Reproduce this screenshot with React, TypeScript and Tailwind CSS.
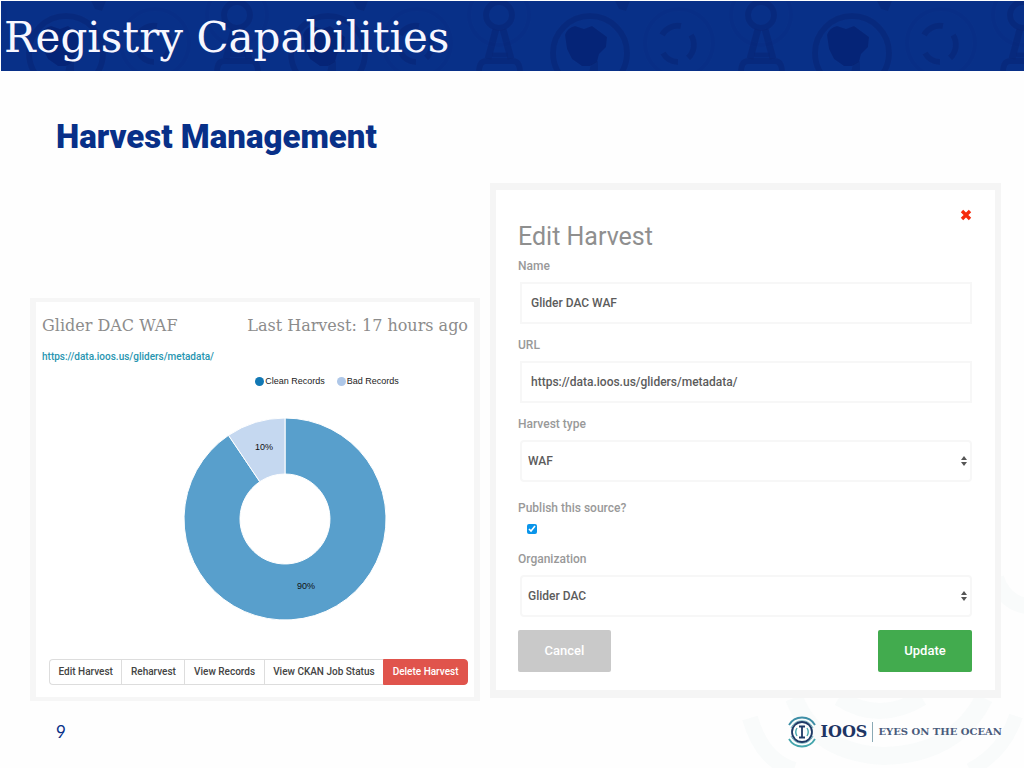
import { ReactNode } from "react"

const slab = "font-['DejaVu_Serif',serif]"
const fieldStyle = "ml-0.5 h-[42px] border-2 border-[#f7f7f7] bg-white text-[12px] font-medium text-[#5c5c5c]"

const actions = ["Edit Harvest", "Reharvest", "View Records", "View CKAN Job Status"]

function HeaderPattern() {
    return (
        <svg className="absolute inset-0 h-full w-full" aria-hidden="true">
            <defs>
                <pattern id="ocean" x="459" y="0" width="262" height="71" patternUnits="userSpaceOnUse">
                    <g fill="none" stroke="#062476" strokeOpacity="0.6">
                        <circle cx="39" cy="14" r="13" strokeWidth="6" />
                        <path d="M36 28 L28 58 M43 28 L51 58" strokeWidth="7" />
                        <path d="M32 54 H48" strokeWidth="5" />
                        <path d="M19 72 Q19 60 26 60 H53 Q60 60 60 72" strokeWidth="6" />
                        <circle cx="130" cy="52" r="37" strokeWidth="6" />
                        <path d="M202 34 A18 18 0 0 1 221 25 M231 34 A18 18 0 0 1 228 57 M218 61 A18 18 0 0 1 203 52" strokeWidth="6" />
                        <circle cx="219" cy="42" r="34" strokeWidth="4" strokeOpacity="0.15" />
                        <circle cx="39" cy="14" r="30" strokeWidth="4" strokeOpacity="0.15" />
                    </g>
                    <path d="M105 34 Q107 27 115 25 L124 28 L132 25 L147 36 L146 46 L139 53 L137 61 L130 65 L122 65 L112 58 L107 48 Z" fill="#04206f" fillOpacity="0.7" />
                    <path d="M155 0 H170 L166 10 L159 8 Z M131 63 L138 60 V71 H129 Z" fill="#04206f" fillOpacity="0.4" />
                </pattern>
            </defs>
            <rect width="100%" height="100%" fill="url(#ocean)" />
        </svg>
    )
}

function Watermark() {
    return (
        <svg className="absolute bottom-0 right-0 -z-10 h-[220px] w-[290px]" viewBox="0 0 290 220" fill="none" stroke="#f9fbfb" aria-hidden="true">
            <path d="M16 170 Q28 212 60 222" strokeWidth="16" />
            <path d="M60 150 Q82 205 150 208 Q222 206 250 150" strokeWidth="18" />
            <path d="M105 150 Q145 176 188 150" strokeWidth="16" />
            <path d="M262 30 Q270 54 292 58" strokeWidth="16" />
            <path d="M236 222 Q270 204 282 168" strokeWidth="14" />
        </svg>
    )
}

function Donut() {
    return (
        <svg width="204" height="204" viewBox="-102 -102 204 204" role="img" aria-label="90% clean records, 10% bad records">
            <g stroke="#fff" strokeWidth="1">
                <path d="M0 -101 A101 101 0 1 1 -56.5 -83.7 L-25.2 -37.3 A45 45 0 1 0 0 -45 Z" fill="#589fcc" />
                <path d="M-56.5 -83.7 A101 101 0 0 1 0 -101 L0 -45 A45 45 0 0 0 -25.2 -37.3 Z" fill="#c5d8f0" />
            </g>
            <g className="font-['Liberation_Sans',sans-serif] text-[9px]" fill="#111" textAnchor="middle">
                <text x="-21" y="-69">10%</text>
                <text x="21" y="70">90%</text>
            </g>
        </svg>
    )
}

function Logo() {
    return (
        <svg className="h-8 w-7" viewBox="0 0 28 32" fill="none" aria-hidden="true">
            <path d="M1 9 A15 15 0 0 1 27 9" stroke="#3d8ea6" strokeWidth="1.8" />
            <path d="M1 23 A15 15 0 0 0 27 23" stroke="#45a6ad" strokeWidth="1.8" />
            <path d="M3 12 A12 12 0 0 1 25 12 M3 20 A12 12 0 0 0 25 20" stroke="#6fb4be" strokeWidth="1" />
            <circle cx="14" cy="16" r="10" stroke="#1e3a66" strokeWidth="1.8" />
            <path d="M9 12 Q6.500 16 9 20 M19 12 Q21.500 16 19 20" stroke="#45a6ad" strokeWidth="1.4" />
            <path d="M11 10.500 H17 M11 21.500 H17 M14 10.500 V21.500" stroke="#1e3a66" strokeWidth="1.8" />
        </svg>
    )
}

function SelectField({ id, value }: { id: string, value: string }) {
    return (
        <div className="relative mt-2 flex flex-col">
            <select id={id} defaultValue={value} className={fieldStyle + " appearance-none rounded-sm px-1.5"}>
                <option>{value}</option>
            </select>
            <svg className="pointer-events-none absolute right-1 top-[15px] h-3 w-2" viewBox="0 0 8 12" fill="#555" aria-hidden="true">
                <path d="M4 1 L7 5 H1 Z M4 11 L1 7 H7 Z" />
            </svg>
        </div>
    )
}

function Label({ id, children }: { id: string, children: ReactNode }) {
    return <label htmlFor={id} className="block text-[12px] leading-4 font-medium text-[#999]">{children}</label>
}

function HarvestCard() {
    return (
        <section className="mt-[115px] border-x-6 border-y-4 border-[#f6f6f6] bg-white px-1.5 pt-3 pb-3">
            <div className={"flex justify-between whitespace-nowrap text-[16px] leading-6 text-[#8c8c8c] " + slab}>
                <h3>Glider DAC WAF</h3>
                <p>Last Harvest: 17 hours ago</p>
            </div>
            <a href="#metadata" className="mt-[11px] block text-[10px] leading-4 font-medium text-[#2795b0]">https://data.ioos.us/gliders/metadata/</a>
            <div className="flex flex-col items-center pl-[60px]">
                <div className="mt-2 flex gap-3 pl-[84px] font-['Liberation_Sans',sans-serif] text-[9px] leading-4 text-[#222]">
                    <span className="flex items-center gap-px"><i className="size-[9px] rounded-full bg-[#1278b4]" />Clean Records</span>
                    <span className="flex items-center gap-px"><i className="size-[9px] rounded-full bg-[#aec7e8]" />Bad Records</span>
                </div>
                <div className="mt-7"><Donut /></div>
            </div>
            <div className="mt-[38px] ml-[7px] flex whitespace-nowrap text-[10px] leading-6 font-medium text-[#444]">
                {actions.map((action) => (
                    <button key={action} type="button" className="grow border border-r-0 border-[#ddd] bg-white px-2 first:rounded-l-sm">{action}</button>
                ))}
                <button type="button" className="grow rounded-r-sm border border-[#e0544c] bg-[#e0544c] px-2 text-white">Delete Harvest</button>
            </div>
        </section>
    )
}

function EditHarvest() {
    return (
        <form className="border-x-6 border-t-7 border-b-8 border-[#f5f5f5] bg-white pt-[19px] pr-[23px] pb-[18px] pl-[22px]">
            <button type="button" aria-label="Close" className="ml-auto block size-3">
                <svg viewBox="0 0 12 12" stroke="#f52a0a" strokeWidth="3.400" aria-hidden="true">
                    <path d="M2 2 L10 10 M10 2 L2 10" />
                </svg>
            </button>
            <h3 className="mb-[5px] text-[25px] leading-8 text-[#8f8f8f]">Edit Harvest</h3>
            <Label id="name">Name</Label>
            <div className="mt-2 mb-[13px] flex flex-col">
                <input id="name" defaultValue="Glider DAC WAF" className={fieldStyle + " px-[9px]"} />
            </div>
            <Label id="url">URL</Label>
            <div className="mt-2 mb-[13px] flex flex-col">
                <input id="url" defaultValue="https://data.ioos.us/gliders/metadata/" className={fieldStyle + " px-[9px]"} />
            </div>
            <Label id="type">Harvest type</Label>
            <SelectField id="type" value="WAF" />
            <div className="mt-[18px] mb-[17px]">
                <Label id="publish">Publish this source?</Label>
                <input id="publish" type="checkbox" defaultChecked className="mt-2 ml-[9px] block size-[10px] accent-[#0a95ea]" />
            </div>
            <Label id="org">Organization</Label>
            <SelectField id="org" value="Glider DAC" />
            <div className="mt-[13px] flex justify-between text-[13px] leading-[42px] font-medium text-white">
                <button type="button" className="w-[93px] rounded-xs bg-[#c9c9c9]">Cancel</button>
                <button type="submit" className="w-[94px] rounded-xs bg-[#42ab4e]">Update</button>
            </div>
        </form>
    )
}

export default function App() {
    return (
        <div className="relative isolate flex min-h-screen flex-col bg-[#fefefe] font-[Roboto,sans-serif]">
            <Watermark />
            <header className="relative mt-px ml-px h-[70px] bg-[#083088]">
                <HeaderPattern />
                <h1 className={"relative pl-[3px] text-[42px] leading-[74px] whitespace-nowrap text-[#f7f7ff] " + slab}>Registry Capabilities</h1>
            </header>
            <main>
                <h2 className="mt-[46px] mb-[26px] pl-14 text-[33px] leading-10 font-black text-[#083088]">Harvest Management</h2>
                <div className="grid grid-cols-[450fr_511fr] items-start gap-[10px] pr-[23px] pl-[30px]">
                    <HarvestCard />
                    <EditHarvest />
                </div>
            </main>
            <footer className="flex items-center justify-between pt-[15px] pr-[22px] pl-14 text-[#083088]">
                <span className="text-[17px] leading-6 font-[Lato,sans-serif]">9</span>
                <div className={"flex items-center font-bold text-[#1e3564] " + slab}>
                    <Logo />
                    <span className="ml-1 text-[16px] leading-6">IOOS</span>
                    <span className="mx-[5px] h-5 w-px bg-[#8aa9b5]" />
                    <span className="text-[10px] leading-4 text-[#4a5b7c]">EYES ON THE OCEAN</span>
                </div>
            </footer>
        </div>
    )
}
